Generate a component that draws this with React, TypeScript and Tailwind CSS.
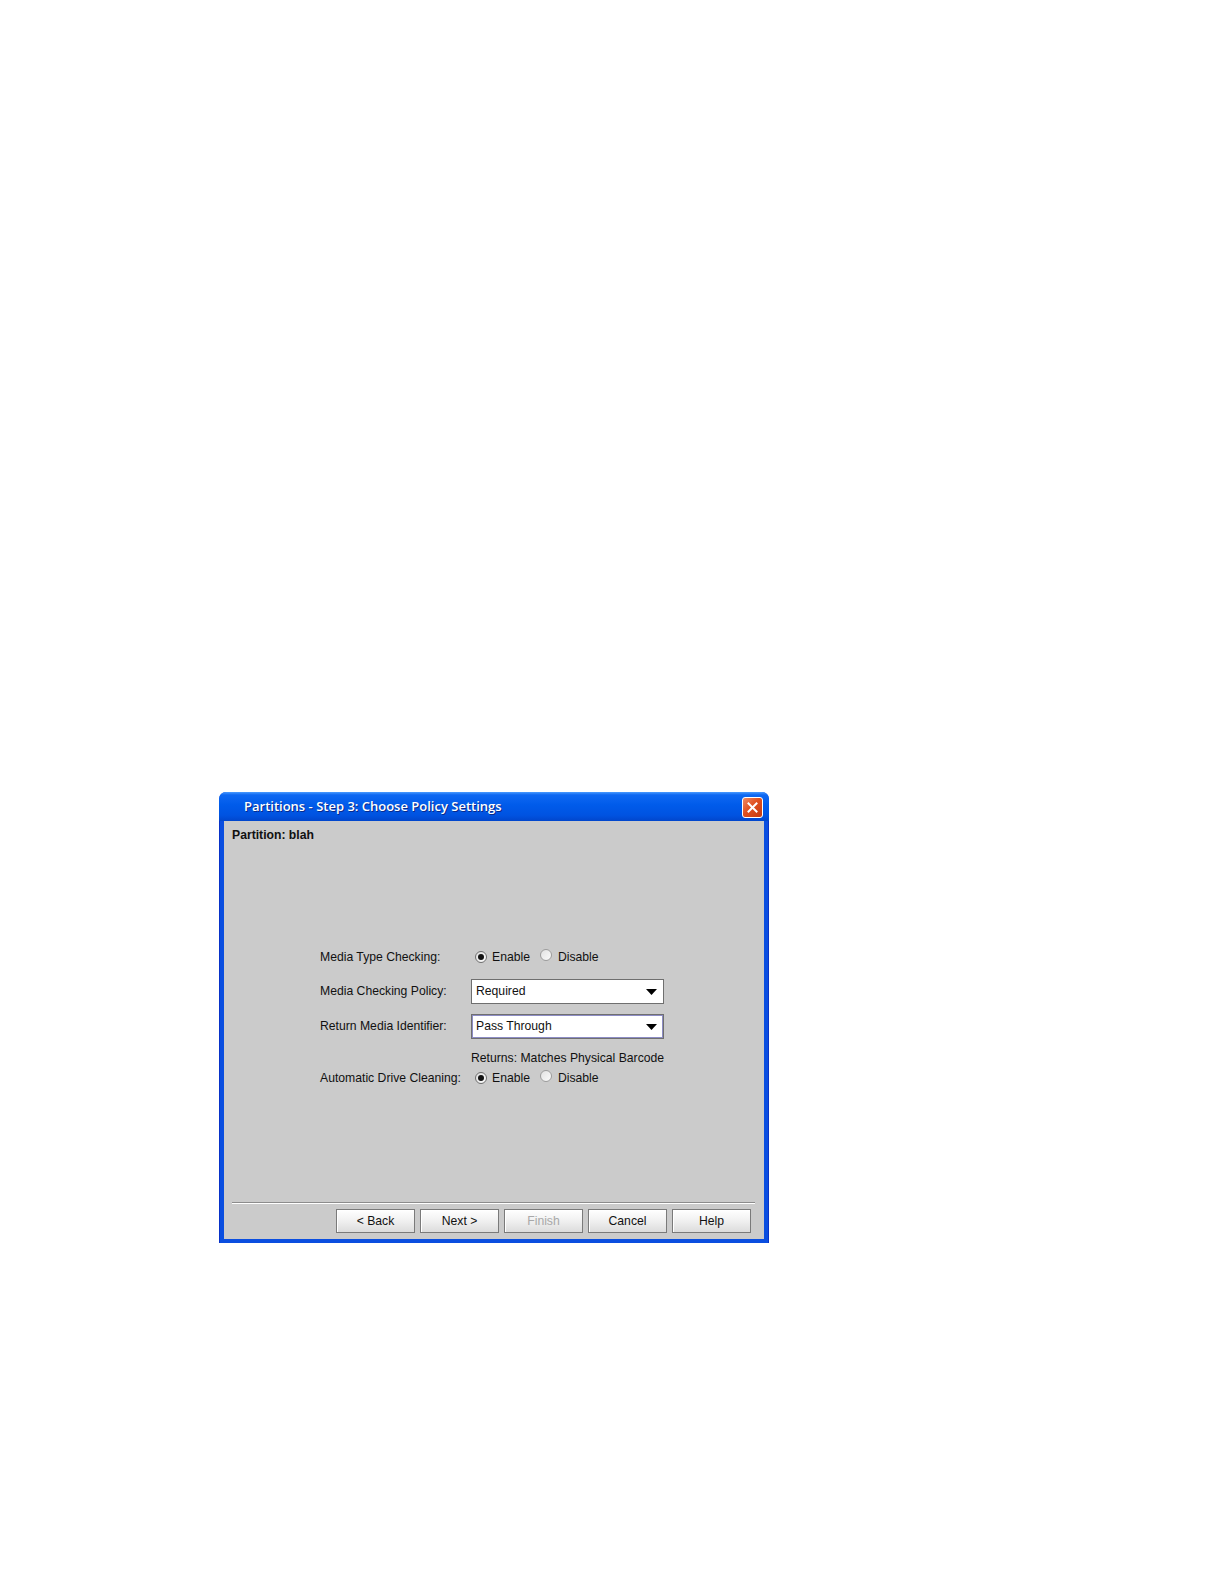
import React from "react";

function Radio({ checked }: { checked: boolean }) {
  return (
    <span
      className={
        "relative inline-flex w-[12px] h-[12px] rounded-full border items-center justify-center " +
        (checked
          ? "border-[#6f6f6f] bg-[linear-gradient(135deg,#dcdcdc,#ffffff)]"
          : "border-[#9c9c9c] bg-[linear-gradient(135deg,#e2e2e2,#fbfbfb)]")
      }
    >
      {checked && <span className="w-[6px] h-[6px] rounded-full bg-[#111]" />}
    </span>
  );
}

function RadioPair() {
  return (
    <div className="flex items-center h-[20px] pl-[4px]">
      <Radio checked />
      <span className="ml-[5px]">Enable</span>
      <span className="ml-[10px]">
        <Radio checked={false} />
      </span>
      <span className="ml-[6px]">Disable</span>
    </div>
  );
}

function Combo({ value, focused }: { value: string; focused?: boolean }) {
  return (
    <div className="w-[193px] h-[25px] border border-[#6f6f6f] bg-white flex">
      <div
        className={
          "flex-1 flex items-center " +
          (focused ? "border border-[#8c8cc4] pl-[3px]" : "border border-white pl-[3px]")
        }
      >
        <span className="flex-1">{value}</span>
        <div className="w-[22px] h-full flex items-center justify-center">
          <svg width="11" height="6" viewBox="0 0 11 6">
            <path d="M0 0 L11 0 L5.5 6 Z" fill="#000" />
          </svg>
        </div>
      </div>
    </div>
  );
}

function Btn({ label, disabled }: { label: string; disabled?: boolean }) {
  return (
    <div
      className={
        "w-[79px] h-[24px] border border-[#7a7a7a] bg-[linear-gradient(to_bottom,#ffffff,#f0f0f0_50%,#dcdcdc)] flex items-center justify-center shadow-[inset_1px_1px_0_#ffffff] " +
        (disabled ? "text-[#a8a8a8]" : "text-[#111]")
      }
    >
      {label}
    </div>
  );
}

export default function App() {
  return (
    <div
      className="w-[1224px] h-[1584px] bg-white pt-[792px] pl-[219px]"
      style={{ fontFamily: '"Liberation Sans", Arial, sans-serif' }}
    >
      <div className="w-[550px] h-[451px] flex flex-col rounded-t-[7px] overflow-hidden bg-[#0a48dc]">
        {/* Title bar */}
        <div className="h-[29px] flex items-center bg-[linear-gradient(to_bottom,#4a9bff_0%,#0e68f2_10%,#005bea_45%,#0053e1_80%,#0146cc_100%)] pl-[25px] pr-[6px] pt-[1px]">
          <span
            className="flex-1 text-white text-[13px] font-semibold [text-shadow:1px_1px_0_#0a2a8a]"
            style={{ fontFamily: '"Open Sans", "DejaVu Sans", sans-serif' }}
          >
            Partitions - Step 3: Choose Policy Settings
          </span>
          <div className="w-[21px] h-[21px] rounded-[3px] border border-white bg-[linear-gradient(135deg,#f08a64,#e0501f_45%,#c43a10)] flex items-center justify-center">
            <svg width="11" height="11" viewBox="0 0 11 11">
              <path d="M1.5 1.5 L9.5 9.5 M9.5 1.5 L1.5 9.5" stroke="#fff" strokeWidth="2" strokeLinecap="square" />
            </svg>
          </div>
        </div>
        {/* Body */}
        <div className="flex-1 flex px-[4px] pb-[4px] border-l border-r border-[#0832c8] bg-[#0a4ee0]">
          <div className="flex-1 bg-[#cbcbcb] flex flex-col text-[12.2px] text-[#111]">
            <div className="pt-[7px] pl-[8px] h-[21px] leading-[14px] font-bold">Partition: blah</div>
            <div className="h-[360px] flex flex-col pt-[105px] pl-[95px]">
              <div className="grid grid-cols-[151px_194px] pl-[1px]">
                <div className="h-[20px] flex items-center">Media Type Checking:</div>
                <RadioPair />
                <div className="h-[25px] mt-[12px] flex items-center">Media Checking Policy:</div>
                <div className="mt-[12px]">
                  <Combo value="Required" />
                </div>
                <div className="h-[25px] mt-[10px] flex items-center">Return Media Identifier:</div>
                <div className="mt-[10px]">
                  <Combo value="Pass Through" focused />
                </div>
                <div className="h-[14px] mt-[12px]" />
                <div className="h-[14px] mt-[12px] flex items-center whitespace-nowrap">Returns: Matches Physical Barcode</div>
                <div className="h-[20px] mt-[3px] flex items-center">Automatic Drive Cleaning:</div>
                <div className="mt-[3px]">
                  <RadioPair />
                </div>
              </div>
            </div>
            <div className="ml-[8px] mr-[9px] border-t border-[#8c8c8c] border-b border-b-white" />
            <div className="flex justify-end gap-[5px] pr-[13px] pt-[5px]">
              <Btn label="< Back" />
              <Btn label="Next >" />
              <Btn label="Finish" disabled />
              <Btn label="Cancel" />
              <Btn label="Help" />
            </div>
          </div>
        </div>
      </div>
    </div>
  );
}
